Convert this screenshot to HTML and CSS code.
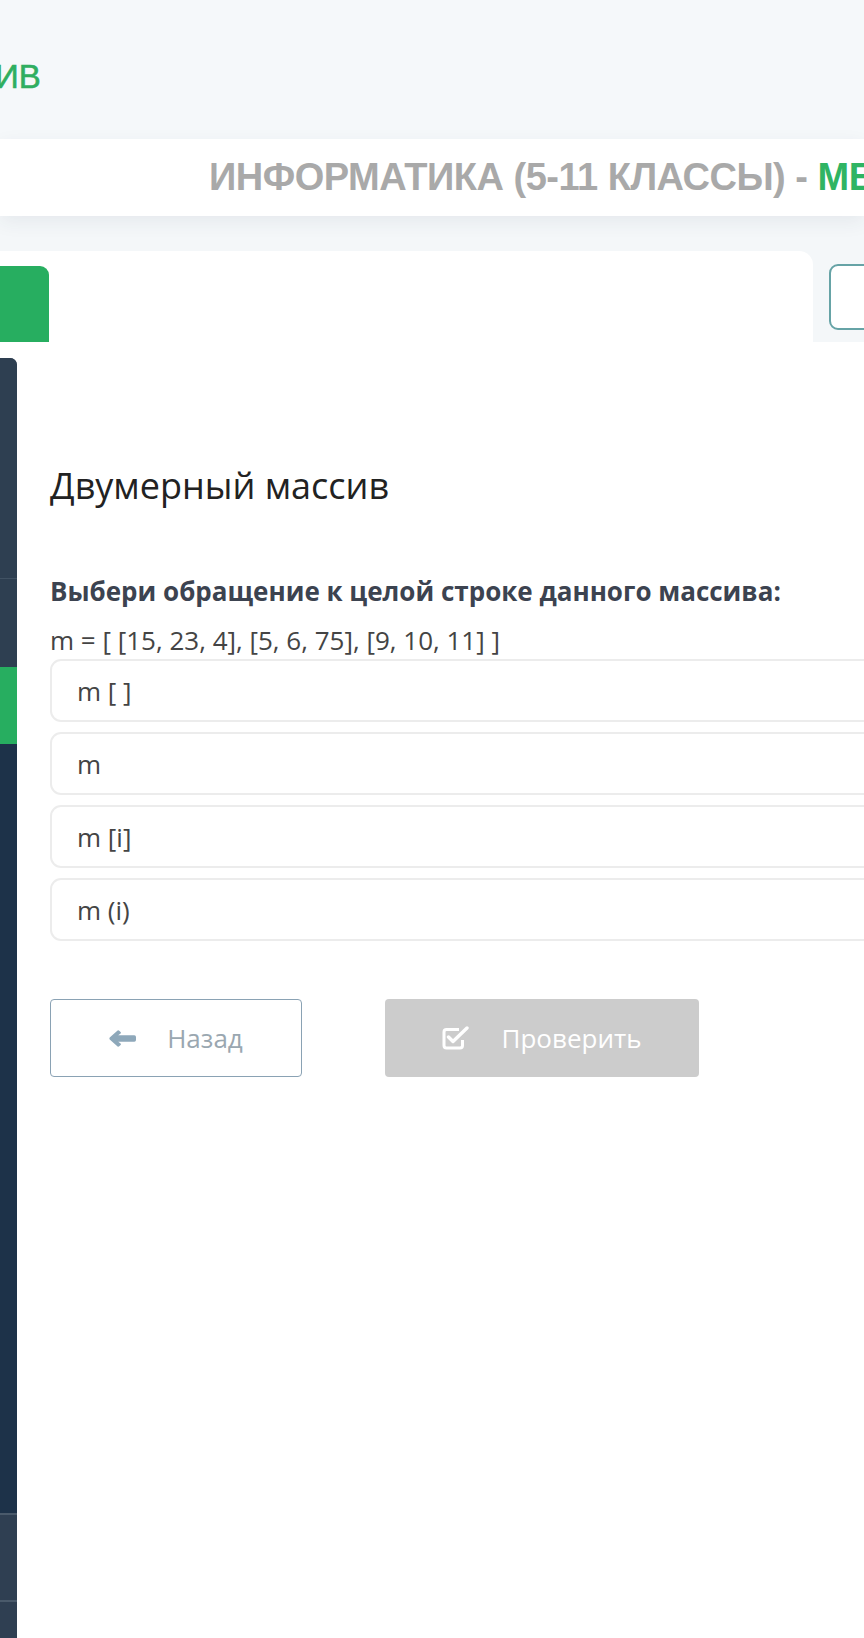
FILE: index.html
```html
<!DOCTYPE html>
<html lang="ru">
<head>
    <meta charset="UTF-8">
    <meta name="viewport" content="width=device-width, initial-scale=1.0">
    <title>Двумерный массив</title>
    <link rel="stylesheet" href="styles.css">
</head>
<body>

    <header class="topbar">
        <div class="logo-text">ИВ</div>
    </header>

    <div class="course-bar">
        <span class="course-name">ИНФОРМАТИКА (5-11 КЛАССЫ) - </span><span class="course-topic">МЕ</span>
    </div>

    <div class="tabs-area">
        <div class="tabs-card">
            <div class="tab-active"></div>
        </div>
        <div class="tab-button"></div>
    </div>

    <div class="layout">
        <aside class="sidebar">
            <div class="side-item side-top"></div>
            <div class="side-item side-second"></div>
            <div class="side-item side-current"></div>
            <div class="side-item side-list"></div>
            <div class="side-item side-bottom"></div>
            <div class="side-item side-last"></div>
        </aside>

        <main class="content">
            <h1 class="task-title">Двумерный массив</h1>

            <p class="question">Выбери обращение к целой строке данного массива:</p>
            <p class="code-line">m = [ [15, 23, 4], [5, 6, 75], [9, 10, 11] ]</p>

            <div class="answers">
                <div class="answer">m [ ]</div>
                <div class="answer">m</div>
                <div class="answer">m [i]</div>
                <div class="answer">m (i)</div>
            </div>

            <div class="actions">
                <button class="btn btn-back">
                    <svg class="btn-icon" width="27" height="17" viewBox="0 0 27 17">
                        <path d="M8.6 0.6 Q9.4 0 10.2 0.7 L11.6 2 Q12.4 2.8 11.6 3.6 L9.2 5.3 L25.3 5.3 Q27 5.3 27 7 L27 10 Q27 11.7 25.3 11.7 L9.2 11.7 L11.6 13.4 Q12.4 14.2 11.6 15 L10.2 16.3 Q9.4 17 8.6 16.4 L0.7 9.4 Q0 8.5 0.7 7.6 Z" fill="#8ea8ba"/>
                    </svg>
                    <span>Назад</span>
                </button>
                <button class="btn btn-check">
                    <svg class="btn-icon" width="28" height="24" viewBox="0 0 28 24">
                        <path d="M17 3.5 H4.5 Q2 3.5 2 6 V19.5 Q2 22 4.5 22 H18 Q20.5 22 20.5 19.5 V14" fill="none" stroke="#fff" stroke-width="3" stroke-linejoin="round"/>
                        <path d="M6.5 11 L11 15.5 L25 2" fill="none" stroke="#fff" stroke-width="3.4" stroke-linecap="round" stroke-linejoin="round"/>
                    </svg>
                    <span>Проверить</span>
                </button>
            </div>
        </main>
    </div>

</body>
</html>
```

FILE: styles.css
```css
* {
    margin: 0;
    padding: 0;
    box-sizing: border-box;
}

body {
    width: 864px;
    height: 1638px;
    overflow: hidden;
    background: #fff;
    font-family: "Open Sans", "Noto Sans", sans-serif;
    color: #444;
}

/* Верхняя полоса с логотипом */
.topbar {
    height: 139px;
    background: #f5f8fa;
    display: flex;
    align-items: center;
}

.logo-text {
    font-family: "Liberation Sans", Arial, sans-serif;
    font-size: 33px;
    color: #2fae60;
    -webkit-text-stroke: 0.6px #2fae60;
    margin-top: 14px;
    margin-left: -5px;
}

/* Название курса */
.course-bar {
    height: 77px;
    background: #fff;
    padding-left: 209px;
    display: flex;
    align-items: center;
    white-space: nowrap;
    overflow: hidden;
    font-family: "Liberation Sans", Arial, sans-serif;
    font-weight: bold;
    font-size: 38px;
    letter-spacing: -0.5px;
    position: relative;
    z-index: 1;
    box-shadow: 0 6px 18px rgba(40, 60, 80, 0.07);
}

.course-name {
    color: #a9a9a9;
    white-space: pre;
}

.course-topic {
    color: #2fb463;
}

/* Вкладки */
.tabs-area {
    height: 126px;
    background: #f4f7f9;
    padding-top: 35px;
    display: flex;
    align-items: flex-start;
}

.tabs-card {
    flex-shrink: 0;
    width: 813px;
    height: 91px;
    background: #fff;
    border-top-right-radius: 14px;
    padding-top: 15px;
}

.tab-active {
    width: 49px;
    height: 76px;
    background: #27ae60;
    border-top-right-radius: 9px;
}

.tab-button {
    flex-shrink: 0;
    margin-left: 16px;
    margin-top: 13px;
    width: 60px;
    height: 66px;
    border: 2px solid #66a3a6;
    border-radius: 9px;
    background: #fff;
}

/* Основная часть */
.layout {
    display: flex;
    margin-top: 16px;
    background: #fff;
}

.sidebar {
    flex-shrink: 0;
    width: 17px;
    height: 1280px;
    display: flex;
    flex-direction: column;
    border-top-right-radius: 7px;
    overflow: hidden;
    background: #2e3f51;
}

.side-top {
    height: 221px;
    background: #2e3f51;
    border-bottom: 1px solid #415263;
}

.side-second {
    height: 88px;
    background: #2e3f51;
}

.side-current {
    height: 77px;
    background: #27ae60;
}

.side-list {
    height: 771px;
    background: #1d3249;
    border-bottom: 2px solid #4a5a6b;
}

.side-bottom {
    height: 87px;
    background: #2f3f52;
    border-bottom: 2px solid #4a5a6b;
}

.side-last {
    flex: 1;
    background: #2f3f52;
}

.content {
    flex: 1;
    min-width: 0;
    overflow: hidden;
    padding-left: 33px;
    padding-top: 104px;
}

.task-title {
    font-weight: normal;
    font-size: 36px;
    color: #222;
    line-height: 48px;
    margin-bottom: 64px;
}

.question {
    font-weight: bold;
    font-size: 26px;
    color: #3c4350;
    line-height: 34px;
    margin-bottom: 15px;
}

.code-line {
    font-size: 26px;
    color: #444;
    line-height: 34px;
}

.answers {
    display: flex;
    flex-direction: column;
    gap: 10px;
    margin-top: 2px;
}

.answer {
    flex-shrink: 0;
    height: 63px;
    width: 840px;
    border: 2px solid #ececec;
    border-radius: 11px;
    padding-left: 25px;
    display: flex;
    align-items: center;
    font-size: 26px;
    color: #444;
}

.actions {
    display: flex;
    gap: 83px;
    margin-top: 58px;
}

.btn {
    height: 78px;
    border-radius: 4px;
    font-family: "Open Sans", "Noto Sans", sans-serif;
    font-size: 26px;
    display: flex;
    align-items: center;
    justify-content: center;
    gap: 31px;
    cursor: pointer;
}

.btn-back {
    width: 252px;
    background: #fff;
    border: 1px solid #8aa2b4;
    color: #9aa7b0;
}

.btn-check {
    width: 314px;
    background: #cccccc;
    border: none;
    color: #fff;
}
```
